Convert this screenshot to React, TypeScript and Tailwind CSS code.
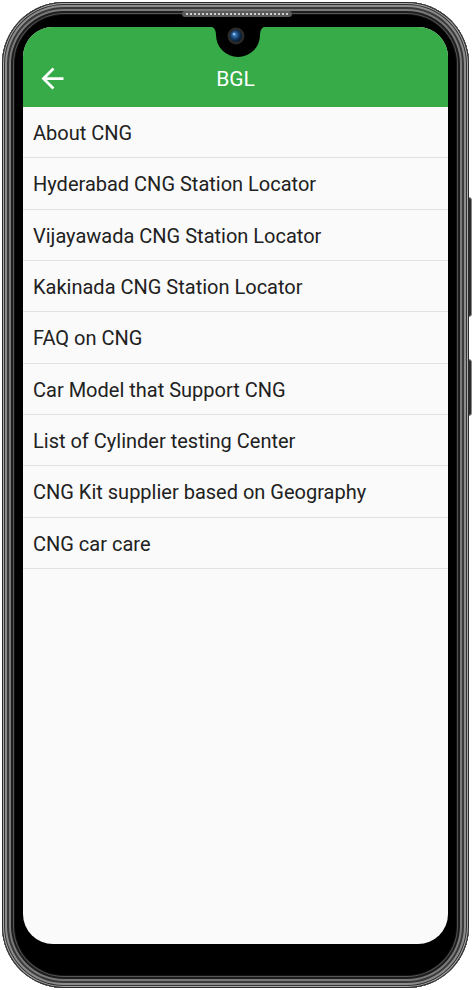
import React from "react";

const items = [
  "About CNG",
  "Hyderabad CNG Station Locator",
  "Vijayawada CNG Station Locator",
  "Kakinada CNG Station Locator",
  "FAQ on CNG",
  "Car Model that Support CNG",
  "List of Cylinder testing Center",
  "CNG Kit supplier based on Geography",
  "CNG car care",
];

export default function App() {
  return (
    <div className="relative w-[473px] h-[990px] bg-white overflow-hidden" style={{ fontFamily: "Roboto, 'Noto Sans', sans-serif" }}>
      {/* side buttons */}
      <div className="absolute left-[466px] top-[197px] w-[6px] h-[120px] rounded-[3px] bg-[#2a2a2a] border border-[#8a8a8a]" />
      <div className="absolute left-[466px] top-[359px] w-[6px] h-[57px] rounded-[3px] bg-[#2a2a2a] border border-[#8a8a8a]" />
      {/* phone body */}
      <div className="absolute left-[2px] top-[2px] w-[467px] h-[986px] rounded-[62px] bg-black pt-[25px] pl-[21px] pr-[21px] pb-[44px] shadow-[inset_0_0_0_1px_#2a2a2a,inset_0_0_0_2px_#a8a8a8,inset_0_0_0_3px_#333,inset_0_0_0_5px_#8c8c8c,inset_0_0_0_7px_#3a3a3a,inset_0_0_0_9px_#7a7a7a,inset_0_0_0_11px_#1e1e1e,inset_0_0_0_12px_#555,inset_0_0_0_13px_#111]">
        {/* speaker */}
        <div className="absolute left-[180px] top-[9px] w-[110px] h-[6px] rounded-full bg-[#5a5a5a] flex items-center px-[4px]">
          <div className="w-full border-t-2 border-dotted border-[#d0d0d0]" />
        </div>
        {/* screen */}
        <div className="relative w-full h-full rounded-[30px] overflow-hidden bg-[#fafafa]">
          <div className="h-[80px] bg-[#36ab47] flex items-end">
            <div className="relative h-[56px] w-full flex items-center justify-center">
              <svg className="absolute left-[13px] top-[11px]" width="33" height="33" viewBox="0 0 24 24" fill="white">
                <path d="M20 11H7.83l5.59-5.59L12 4l-8 8 8 8 1.41-1.41L7.83 13H20v-2z" />
              </svg>
              <span className="text-white text-[21px] font-normal leading-none">BGL</span>
            </div>
          </div>
          <div className="flex flex-col">
            {items.map((t) => (
              <div key={t} className="h-[51.33px] box-border border-b border-[#e2e2e2] flex items-center pl-[10px] pt-[2px] text-[20px] text-[#212121]">
                {t}
              </div>
            ))}
          </div>
          {/* notch */}
          <svg className="absolute left-[185px] top-[-1px]" width="60" height="32" viewBox="0 0 60 32">
            <path d="M0 0 H60 C55 0 52 3 52 9 A22 22 0 0 1 8 9 C8 3 5 0 0 0 Z" fill="black" />
          </svg>
          <svg className="absolute left-[204px] top-[0px]" width="18" height="18" viewBox="0 0 18 18">
            <defs>
              <radialGradient id="lens" cx="0.4" cy="0.4" r="0.6">
                <stop offset="0" stopColor="#4a8fd0" />
                <stop offset="0.6" stopColor="#123a66" />
                <stop offset="1" stopColor="#0a1a2a" />
              </radialGradient>
            </defs>
            <circle cx="9" cy="9" r="8.5" fill="#2a2a2a" />
            <circle cx="9" cy="9" r="6" fill="url(#lens)" />
            <circle cx="7" cy="7" r="1.3" fill="#9fd0ff" opacity="0.8" />
          </svg>
        </div>
      </div>
    </div>
  );
}
